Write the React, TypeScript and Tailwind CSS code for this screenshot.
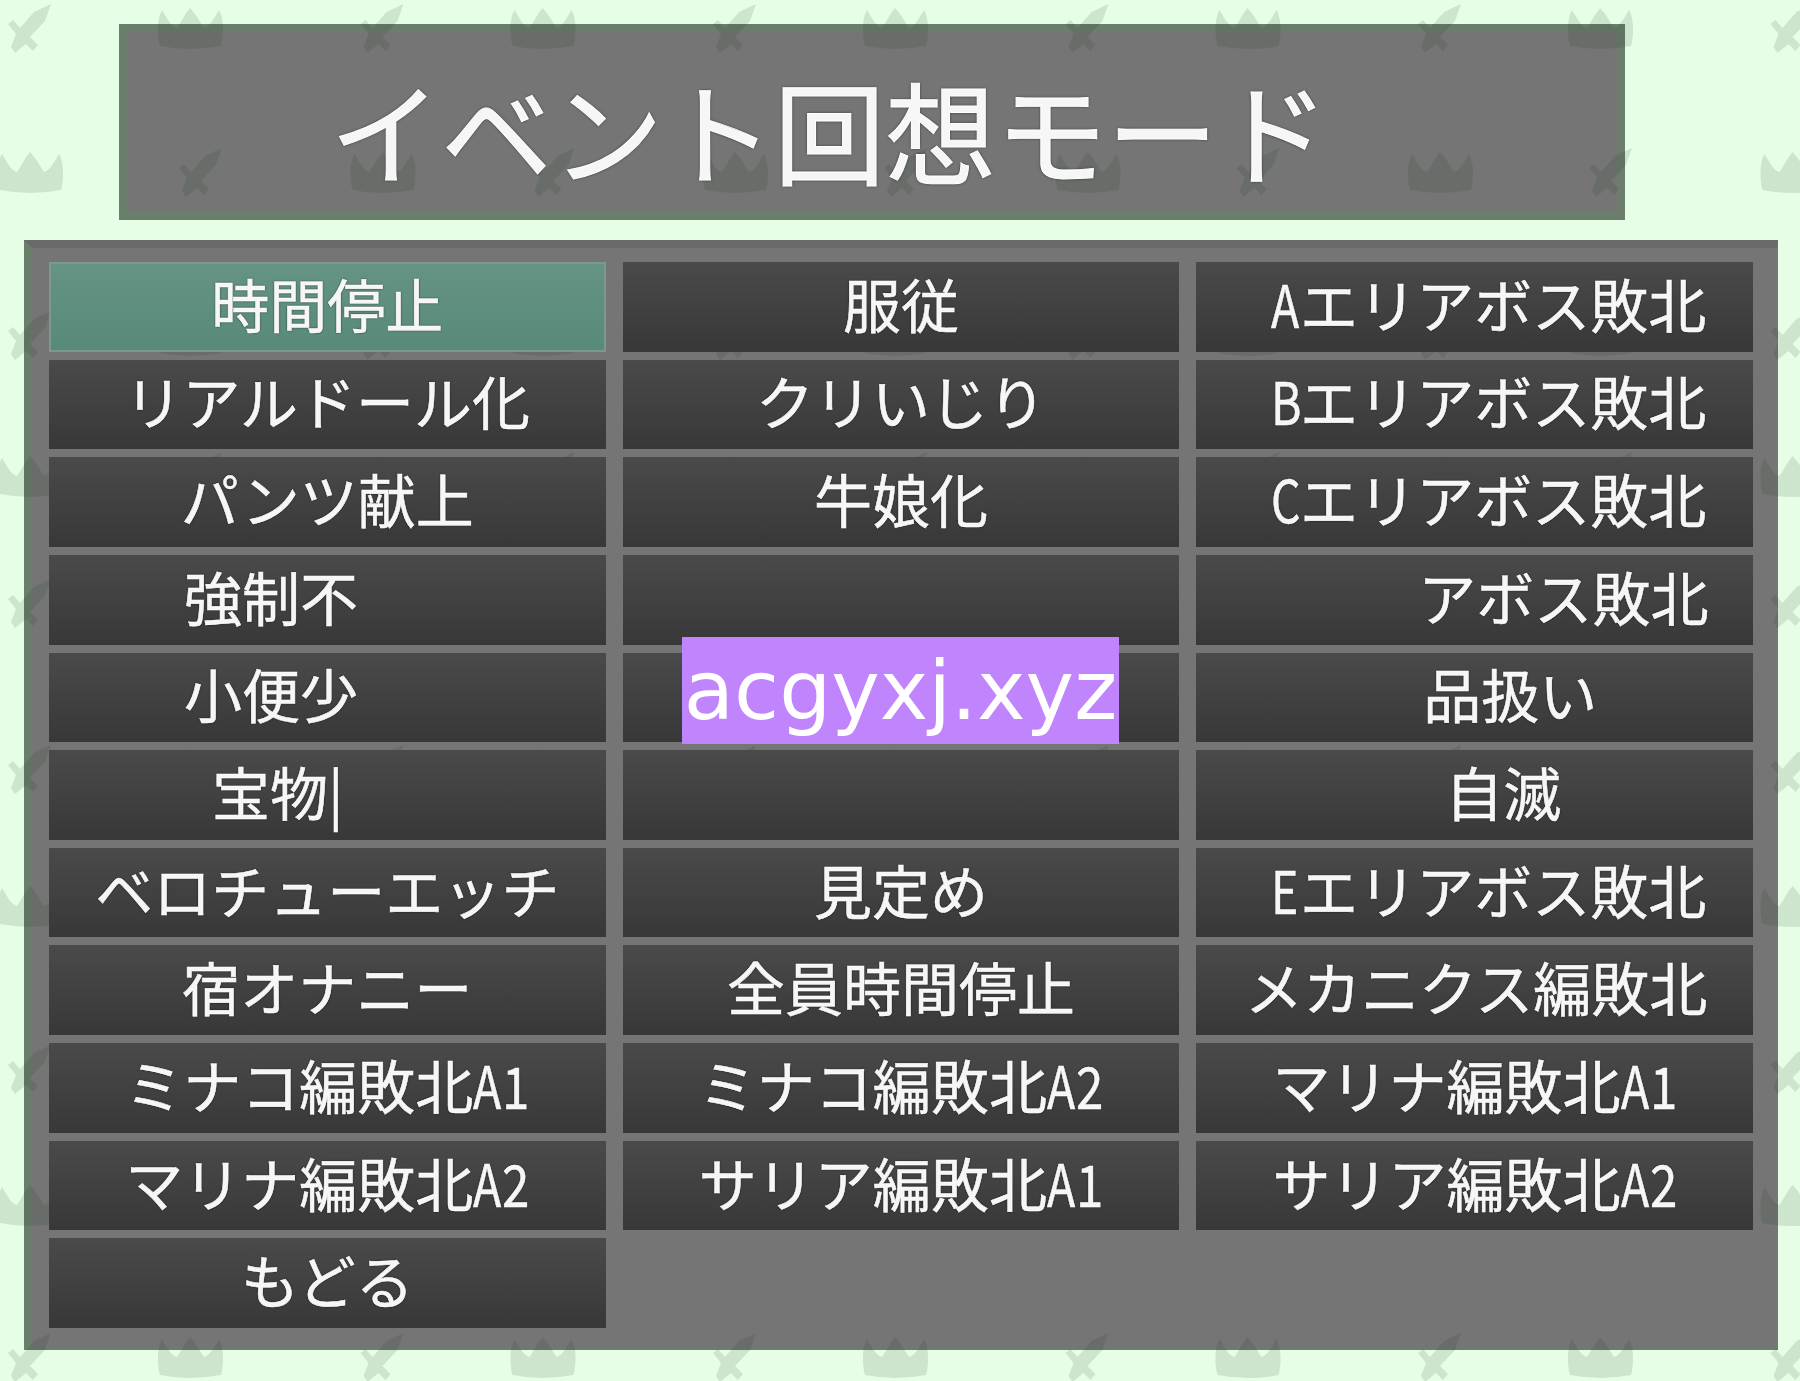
const swordPath =
  "M48 3 L31 11 L17 27 L10 19 L5 23 L13 33 L8 46 L12 52 L23 43 L30 50 L35 44 L27 36 L42 20 Z";
const crownPath =
  "M2 38 C-1 28 -1 10 4 2 C8 8 12 18 19 20 C23 14 27 6 32 0 C38 6 42 14 46 20 C53 18 57 8 61 2 C66 10 66 28 63 38 Q32 44 2 38 Z";

// mark rows down the page; A = sword first, B = crown first
const markRows: [number, "A" | "B"][] = [
  [28, "A"],
  [172, "B"],
  [335, "A"],
  [476, "B"],
  [603, "A"],
  [769, "A"],
  [906, "B"],
  [1069, "A"],
  [1205, "B"],
  [1357, "A"],
];

type Cell = { label?: string; text?: string };

const cells: Cell[] = [
  { label: "時間停止" },
  { label: "服従" },
  { label: "Aエリアボス敗北", text: "justify-center pl-[28px]" },
  { label: "リアルドール化" },
  { label: "クリいじり" },
  { label: "Bエリアボス敗北", text: "justify-center pl-[28px]" },
  { label: "パンツ献上" },
  { label: "牛娘化" },
  { label: "Cエリアボス敗北", text: "justify-center pl-[28px]" },
  { label: "強制不", text: "justify-start pl-[135px]" },
  {},
  { label: "アボス敗北", text: "justify-start pl-[222px]" },
  { label: "小便少", text: "justify-start pl-[135px]" },
  {},
  { label: "品扱い", text: "justify-start pl-[227px]" },
  { label: "宝物|", text: "justify-start pl-[163px]" },
  {},
  { label: "自滅", text: "justify-start pl-[249px]" },
  { label: "ベロチューエッチ" },
  { label: "見定め" },
  { label: "Eエリアボス敗北", text: "justify-center pl-[28px]" },
  { label: "宿オナニー" },
  { label: "全員時間停止" },
  { label: "メカニクス編敗北", text: "justify-center pl-[3px]" },
  { label: "ミナコ編敗北A1" },
  { label: "ミナコ編敗北A2" },
  { label: "マリナ編敗北A1" },
  { label: "マリナ編敗北A2" },
  { label: "サリア編敗北A1" },
  { label: "サリア編敗北A2" },
  { label: "もどる" },
];

// the Latin letters and digits of a label are squeezed narrower than the kana
function Label({ value }: { value: string }) {
  return (
    <>
      {value.split("").map((char, i) =>
        /[A-Z]/.test(char) ? (
          <span key={i} className="inline-block w-[0.5em] origin-left scale-x-[0.8]">
            {char}
          </span>
        ) : /[0-9]/.test(char) ? (
          <span key={i} className="inline-block w-[0.47em] origin-left scale-x-[0.85]">
            {char}
          </span>
        ) : (
          char
        ),
      )}
    </>
  );
}

function Marks() {
  const columns = [0, 1, 2, 3, 4, 5];
  return (
    <svg
      width="1800"
      height="1381"
      viewBox="0 0 1800 1381"
      className="pointer-events-none absolute inset-0"
      fill="#1e3c1e"
      fillOpacity="0.13"
    >
      {markRows.map(([y, kind]) =>
        columns.map((n) => {
          const swordX = (kind === "A" ? 28 : 199) + 352.5 * n;
          const crownX = (kind === "A" ? 190 : 30) + 352.5 * n;
          return (
            <g key={`${y}-${n}`}>
              <path d={swordPath} transform={`translate(${swordX - 25} ${y - 27})`} />
              <path d={crownPath} transform={`translate(${crownX - 32} ${y - 20})`} />
            </g>
          );
        }),
      )}
    </svg>
  );
}

export default function App() {
  return (
    <div className="relative h-[1381px] w-[1800px] overflow-hidden bg-[#e6fee6] pt-6 font-['Noto_Sans_CJK_JP','Noto_Sans',sans-serif] text-[#f6f6f6]">
      {/* Title */}
      <div className="ml-[119px] flex h-[196px] w-[1506px] items-center justify-center border-8 border-[#6b7d6b] bg-[#757575]">
        <h1 className="relative z-10 mr-[85px] pt-3 text-[111px] leading-none font-normal whitespace-nowrap [-webkit-text-stroke:1px_#fff] [text-shadow:0_0_3px_#222]">
          イベント回想モード
        </h1>
      </div>

      {/* Menu panel */}
      <div className="mt-5 ml-6 h-[1110px] w-[1754px] border-t-8 border-r border-b-2 border-l-8 border-t-[#6a6a6a] border-r-[#6b7d6b] border-b-[#6b7d6b] border-l-[#6b7d6b] bg-[#757575] pt-[14px] pl-[17px]">
        <div className="grid h-[1066px] w-[1704px] grid-cols-3 grid-rows-[repeat(11,1fr)] gap-x-[17px] gap-y-2">
          {cells.map((cell, i) => (
            <button
              key={i}
              type="button"
              className={`relative z-10 flex items-center overflow-hidden pb-2 text-[58px] leading-none whitespace-nowrap [-webkit-text-stroke:0.5px_#fff] [text-shadow:0_0_2px_#111] ${
                cell.text ?? "justify-center"
              } ${
                i === 0
                  ? "border-2 border-[#7a9a8c] bg-gradient-to-b from-[#659384] to-[#588a79]"
                  : "bg-gradient-to-b from-[#4a4a4a] to-[#383838]"
              }`}
            >
              {cell.label && (
                <span>
                  <Label value={cell.label} />
                </span>
              )}
            </button>
          ))}
        </div>
      </div>

      {/* Watermark */}
      <div className="absolute top-[637px] left-[682px] z-20 flex h-[107px] w-[437px] items-center justify-center bg-[#c084fc] font-['DejaVu_Sans',sans-serif] text-[82px] leading-none text-white">
        acgyxj.xyz
      </div>

      <Marks />
    </div>
  );
}
